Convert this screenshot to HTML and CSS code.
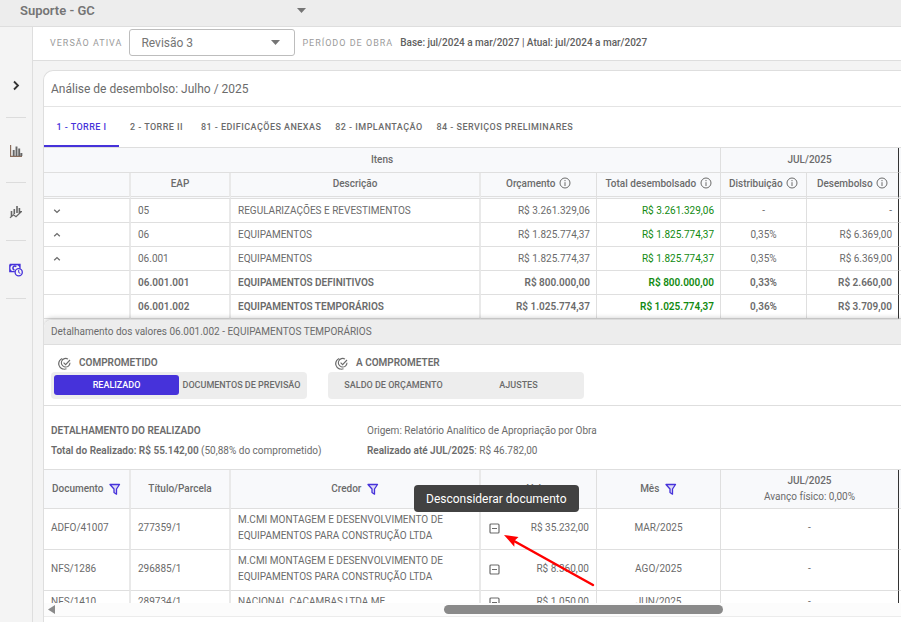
FILE: index.html
```html
<!DOCTYPE html>
<html lang="pt-BR">
<head>
<meta charset="utf-8">
<title>Análise de desembolso</title>
<link rel="stylesheet" href="styles.css">
</head>
<body>
<svg class="defs" aria-hidden="true">
  <symbol id="info" viewBox="0 0 12 12"><circle cx="6" cy="6" r="5" fill="none" stroke="currentColor"/><path d="M6 5.2V9M6 3v1.2" stroke="currentColor"/></symbol>
  <symbol id="filter" viewBox="0 0 12 12"><path d="M1 1.500h9.500L7.500 6v5.200L5 9.500V6z" fill="#4632da" fill-opacity=".15" stroke="currentColor" stroke-width="1.300" stroke-linejoin="round"/></symbol>
  <symbol id="check" viewBox="0 0 13 13"><path d="M12 5.800A4.300 4.300 0 1 1 10 2.100M8.500 11.800A5.400 5.400 0 0 1 4.200 1.600M1.800 3.200A5.800 5.800 0 0 0 4.300 12M5.600 5.600l2 2L12 3" fill="none" stroke="currentColor" stroke-width="1.100"/></symbol>
  <symbol id="minus" viewBox="0 0 11 11"><rect x="1" y="1" width="9" height="9" rx="1" fill="none" stroke="currentColor" stroke-width="1.200"/><path d="M3 5.500h5" stroke="currentColor"/></symbol>
  <symbol id="down" viewBox="0 0 8 8"><path d="M1.200 2.800L4 5.400l2.800-2.600" fill="none" stroke="currentColor" stroke-width="1.300"/></symbol>
  <symbol id="up" viewBox="0 0 8 8"><path d="M1.200 5.200L4 2.600l2.800 2.600" fill="none" stroke="currentColor" stroke-width="1.300"/></symbol>
</svg>

<header class="topbar">
  <select class="company" aria-label="Empresa"><option>Suporte - GC</option></select>
</header>

<div class="shell">
  <nav class="sidebar" aria-label="Menu">
    <button class="side-item side-toggle" aria-label="Expandir menu"><svg viewBox="0 0 14 14"><path d="M5 3.500l4 4-4 4" fill="none" stroke="#333" stroke-width="1.800"/></svg></button>
    <button class="side-item side-tall" aria-label="Indicadores"><svg viewBox="0 0 14 14"><path d="M1.600 2v11.400H13" fill="none" stroke="#8a6d5c" stroke-width="1.200"/><path d="M4.700 7v6M7.500 3.500V13M10.200 5.500V13M12.400 10v3" stroke="#666" stroke-width="1.900"/></svg></button>
    <button class="side-item" aria-label="Análises"><svg viewBox="0 0 14 14"><path d="M2.500 6v5M5.300 4v5M8 1v7M10.400 3v5" stroke="#666" stroke-width="1.600"/><path d="M1 12.700l3.500-3 2.500 2 5.500-5.200M10 6.500h3" fill="none" stroke="#666" stroke-width="1.200"/></svg></button>
    <button class="side-item side-current" aria-label="Desembolso"><svg viewBox="0 0 14 14"><path d="M.8 1.500h10.200v4M.8 1.500v7.200h5" fill="none" stroke="currentColor" stroke-width="1.300"/><path d="M1 1.500h2.500L1 4zM11 1.500v3L8 1.500zM1 9V6l3 3z" fill="currentColor"/><path d="M7.300 3.600A2 2 0 1 0 5.500 7" fill="none" stroke="currentColor" stroke-width="1.500"/><circle cx="9.700" cy="9.300" r="3.600" fill="#f4f4f4" stroke="currentColor" stroke-width="1.300"/><path d="M9.700 7v2.500l1.600.9" fill="none" stroke="currentColor"/></svg></button>
  </nav>

  <main class="content">
    <div class="toolbar">
      <label class="caption" for="versao">VERSÃO ATIVA</label>
      <select class="version" id="versao"><option>Revisão 3</option></select>
      <span class="caption">PERÍODO DE OBRA</span>
      <span class="period">Base: jul/2024 a mar/2027 | Atual: jul/2024 a mar/2027</span>
    </div>

    <section class="card">
      <h1 class="card-title">Análise de desembolso: Julho / 2025</h1>
      <div class="tabs" role="tablist">
        <button class="tab tab-active" role="tab" aria-selected="true">1 - TORRE I</button>
        <button class="tab" role="tab">2 - TORRE II</button>
        <button class="tab" role="tab">81 - EDIFICAÇÕES ANEXAS</button>
        <button class="tab" role="tab">82 - IMPLANTAÇÃO</button>
        <button class="tab" role="tab">84 - SERVIÇOS PRELIMINARES</button>
      </div>

      <table class="grid">
        <colgroup><col class="c-a"><col class="c-b"><col class="c-c"><col class="c-d"><col class="c-e"><col class="c-f"><col class="c-g"><col></colgroup>
        <thead>
          <tr><th colspan="5">Itens</th><th class="month-end" colspan="2">JUL/2025</th><th></th></tr>
          <tr class="head-last"><th class="wide"></th><th class="wide">EAP</th><th class="wide">Descrição</th><th>Orçamento <svg class="info"><use href="#info"/></svg></th><th>Total desembolsado <svg class="info"><use href="#info"/></svg></th><th>Distribuição <svg class="info"><use href="#info"/></svg></th><th class="month-end">Desembolso <svg class="info"><use href="#info"/></svg></th><th></th></tr>
        </thead>
        <tbody>
          <tr><td class="wide"><button class="expand" aria-label="Expandir"><svg><use href="#down"/></svg></button></td><td class="wide">05</td><td class="wide">REGULARIZAÇÕES E REVESTIMENTOS</td><td class="num">R$ 3.261.329,06</td><td class="num paid">R$ 3.261.329,06</td><td class="mid">-</td><td class="num month-end">-</td><td></td></tr>
          <tr><td class="wide"><button class="expand" aria-label="Recolher"><svg><use href="#up"/></svg></button></td><td class="wide">06</td><td class="wide">EQUIPAMENTOS</td><td class="num">R$ 1.825.774,37</td><td class="num paid">R$ 1.825.774,37</td><td class="mid">0,35%</td><td class="num month-end">R$ 6.369,00</td><td></td></tr>
          <tr><td class="wide"><button class="expand" aria-label="Recolher"><svg><use href="#up"/></svg></button></td><td class="wide">06.001</td><td class="wide">EQUIPAMENTOS</td><td class="num">R$ 1.825.774,37</td><td class="num paid">R$ 1.825.774,37</td><td class="mid">0,35%</td><td class="num month-end">R$ 6.369,00</td><td></td></tr>
          <tr class="leaf"><td class="wide"></td><td class="wide">06.001.001</td><td class="wide">EQUIPAMENTOS DEFINITIVOS</td><td class="num">R$ 800.000,00</td><td class="num paid">R$ 800.000,00</td><td class="mid">0,33%</td><td class="num month-end">R$ 2.660,00</td><td></td></tr>
          <tr class="leaf"><td class="wide"></td><td class="wide">06.001.002</td><td class="wide">EQUIPAMENTOS TEMPORÁRIOS</td><td class="num">R$ 1.025.774,37</td><td class="num paid">R$ 1.025.774,37</td><td class="mid">0,36%</td><td class="num month-end">R$ 3.709,00</td><td></td></tr>
        </tbody>
      </table>

      <section class="detail">
        <h2 class="detail-title">Detalhamento dos valores 06.001.002 - EQUIPAMENTOS TEMPORÁRIOS</h2>
        <div class="groups">
          <div class="group">
            <h3 class="group-name"><svg><use href="#check"/></svg>COMPROMETIDO</h3>
            <div class="segments"><button class="segment segment-on">REALIZADO</button><button class="segment">DOCUMENTOS DE PREVISÃO</button></div>
          </div>
          <div class="group">
            <h3 class="group-name"><svg><use href="#check"/></svg>A COMPROMETER</h3>
            <div class="segments"><button class="segment">SALDO DE ORÇAMENTO</button><button class="segment">AJUSTES</button></div>
          </div>
        </div>
        <div class="summary">
          <div class="summary-col"><p><b>DETALHAMENTO DO REALIZADO</b></p><p><b>Total do Realizado: R$ 55.142,00</b> (50,88% do comprometido)</p></div>
          <div class="summary-col"><p>Origem: Relatório Analítico de Apropriação por Obra</p><p><b>Realizado até JUL/2025</b>: R$ 46.782,00</p></div>
        </div>
        <div class="documents">
          <table class="grid grid-docs">
            <colgroup><col class="c-a"><col class="c-b"><col class="c-c"><col class="c-d"><col class="c-e"><col class="c-h"><col></colgroup>
            <thead>
              <tr><th class="wide">Documento <svg class="filter"><use href="#filter"/></svg></th><th class="wide">Título/Parcela</th><th class="wide">Credor <svg class="filter"><use href="#filter"/></svg></th><th>Valor</th><th>Mês <svg class="filter"><use href="#filter"/></svg></th><th class="month-end">JUL/2025<small class="progress">Avanço físico: 0,00%</small></th><th></th></tr>
            </thead>
            <tbody>
              <tr><td class="wide">ADFO/41007</td><td class="wide">277359/1</td><td class="wide">M.CMI MONTAGEM E DESENVOLVIMENTO DE EQUIPAMENTOS PARA CONSTRUÇÃO LTDA</td>
                <td><div class="value"><span class="discard-wrap"><button class="discard" aria-label="Desconsiderar documento" aria-describedby="tip"><svg><use href="#minus"/></svg></button><span class="tooltip" id="tip" role="tooltip">Desconsiderar documento</span><svg class="pointer" viewBox="0 0 92 54" aria-hidden="true"><path d="M10 7L89 51" stroke="#f00" stroke-width="2.500" stroke-linecap="round"/><path d="M0 1l14.500 2-4 3.800-.2 6z" fill="#f00"/></svg></span>R$ 35.232,00</div></td><td class="mid">MAR/2025</td><td class="mid month-end">-</td><td></td></tr>
              <tr><td class="wide">NFS/1286</td><td class="wide">296885/1</td><td class="wide">M.CMI MONTAGEM E DESENVOLVIMENTO DE EQUIPAMENTOS PARA CONSTRUÇÃO LTDA</td>
                <td><div class="value"><button class="discard" aria-label="Desconsiderar documento"><svg><use href="#minus"/></svg></button>R$ 8.360,00</div></td><td class="mid">AGO/2025</td><td class="mid month-end">-</td><td></td></tr>
              <tr><td class="wide">NFS/1410</td><td class="wide">289734/1</td><td class="wide">NACIONAL CAÇAMBAS LTDA ME</td>
                <td><div class="value"><button class="discard" aria-label="Desconsiderar documento"><svg><use href="#minus"/></svg></button>R$ 1.050,00</div></td><td class="mid">JUN/2025</td><td class="mid month-end">-</td><td></td></tr>
            </tbody>
          </table>
        </div>
        <div class="scrollbar"><svg class="scroll-arrow" viewBox="0 0 8 10"><path d="M7 0v9L0 4.500z" fill="#8a8a8a"/></svg><div class="scroll-track"><div class="scroll-thumb"></div></div></div>
      </section>
    </section>
  </main>
</div>
</body>
</html>
```
FILE: styles.css
```css
* { box-sizing: border-box; }

body {
  margin: 0;
  height: 100vh;
  display: flex;
  flex-direction: column;
  overflow: hidden;
  background: #f4f4f4;
  color: #6b6b6b;
  font: 10px/16px Roboto, sans-serif;
}

h1, h2, h3, p { margin: 0; font-weight: 400; }
b { font-weight: 600; }
button { padding: 0; border: 0; background: none; color: inherit; font: inherit; }
.defs { display: none; }

select {
  appearance: none;
  border: 0;
  background: no-repeat right 14px center / 9px 5px url("data:image/svg+xml,%3Csvg xmlns='http://www.w3.org/2000/svg' viewBox='0 0 9 5'%3E%3Cpath d='M0 0h9L4.500 5z' fill='%23757575'/%3E%3C/svg%3E");
  color: #757575;
  font: inherit;
}

.topbar {
  flex: none;
  display: flex;
  padding: 0 16px 5px;
  background-color: #ededed;
  border-bottom: 1px solid #dedede;
}
.company {
  width: 304px;
  height: 21px;
  padding: 0 4px;
  font-size: 13px;
  font-weight: 600;
}

.shell { flex: 1; min-height: 0; display: flex; }

.sidebar {
  flex: none;
  width: 33px;
  display: flex;
  flex-direction: column;
  align-items: center;
  padding-top: 26px;
  border-right: 1px solid #dedede;
}
.side-item {
  width: 20px;
  height: 58px;
  display: grid;
  place-items: center;
  border-bottom: 1px solid #dcdcdc;
}
.side-toggle, .side-tall { height: 65px; }
.side-item svg { width: 14px; height: 14px; }
.side-current { color: #4632da; }

.content { flex: 1; min-width: 0; display: flex; flex-direction: column; }

.toolbar {
  display: flex;
  align-items: center;
  gap: 7px;
  padding: 2px 17px 4px;
  height: 34px;
  background: #fff;
  border-bottom: 1px solid #dedede;
}
.caption { color: #9b9b9b; font-size: 9px; letter-spacing: 1px; white-space: nowrap; }
.version {
  width: 166px;
  height: 27px;
  padding: 0 11px;
  border: 1px solid #bdbdbd;
  border-radius: 3px;
  background-color: #fff;
  font-size: 12px;
}
.period { font-weight: 500; color: #606060; white-space: nowrap; }

.card {
  flex: 1;
  min-height: 0;
  display: flex;
  flex-direction: column;
  margin: 9px 0 0 10px;
  overflow: hidden;
  background: #fff;
  border: solid #dedede;
  border-width: 1px 0 0 1px;
  border-radius: 10px 0 0 0;
}
.card-title {
  padding: 1px 7px 0;
  font-size: 12px;
  line-height: 34px;
  border-bottom: 1px solid #e4e4e4;
}

.tabs { display: flex; border-bottom: 1px solid #dedede; }
.tab {
  min-width: 75px;
  height: 40px;
  padding: 2px 7px 0;
  border-bottom: 2px solid transparent;
  font-size: 9px;
  font-weight: 500;
  letter-spacing: 0.05em;
  white-space: nowrap;
}
.tab-active { color: #4632da; border-color: #4632da; }

.grid {
  flex: none;
  width: 100%;
  table-layout: fixed;
  border-collapse: separate;
  border-spacing: 0;
}
.c-a { width: 87px; }
.c-b { width: 100px; }
.c-c { width: 250px; }
.c-d { width: 116px; }
.c-e { width: 124px; }
.c-f { width: 86px; }
.c-g { width: 92px; }
.c-h { width: 178px; }

.grid th, .grid td {
  padding: 0 7px;
  border: solid #dfdfdf;
  border-width: 0 1px 1px 0;
  white-space: nowrap;
}
.grid th {
  height: 25px;
  padding: 0 2px;
  background: #f8f9fb;
  font-weight: 500;
  text-align: center;
}
.grid td { height: 24px; text-align: left; }
.grid .wide { border-right: 2px solid #e9e9e9; }
.grid .month-end { border-right: 1px solid #333; }
.grid th:last-child, .grid td:last-child { padding: 0; border-right: 0; }
.grid .head-last th { height: 26px; padding-bottom: 2px; border-bottom: 3px double #dfdfdf; }
.grid .num { text-align: right; padding: 0 6px; }
.grid .mid { text-align: center; }
.grid .paid { color: #118a11; }
.grid .leaf { font-weight: 600; }

.info { width: 12px; height: 12px; margin-left: 1px; vertical-align: -2px; }
.filter { width: 12px; height: 12px; margin-left: 3px; color: #4632da; vertical-align: -3px; }
.expand { width: 12px; height: 12px; display: grid; place-items: center; }
.expand svg { width: 8px; height: 8px; }

.detail {
  flex: 1;
  min-height: 0;
  display: flex;
  flex-direction: column;
  margin-top: 1px;
  border-radius: 8px 0 0 0;
  background: #fff;
  box-shadow: 0 -2px 5px rgba(0, 0, 0, 0.2);
}
.detail-title {
  padding: 0 7px;
  font-size: 10px;
  line-height: 24px;
  background: #ededed;
  border-bottom: 1px solid #dedede;
  border-radius: 8px 0 0 0;
}

.groups { display: flex; gap: 21px; padding: 10px 7px 6px; border-bottom: 1px solid #dedede; }
.group-name {
  display: flex;
  align-items: center;
  gap: 8px;
  padding-left: 7px;
  font-size: 10px;
  font-weight: 600;
}
.group-name svg { width: 13px; height: 13px; }
.segments { display: flex; margin-top: 1px; padding: 3px 3px 4px; background: #ededed; border-radius: 4px; }
.segment {
  width: 125px;
  height: 20px;
  border-radius: 3px;
  font-size: 9px;
  font-weight: 500;
  white-space: nowrap;
}
.segment-on { background: #4632da; color: #fff; }

.summary { display: flex; padding: 15px 7px 8px; line-height: 20px; border-bottom: 1px solid #dedede; }
.summary-col { flex: none; width: 316px; white-space: nowrap; }

.documents { flex: 1; min-height: 0; overflow: hidden; }
.grid-docs th { height: 39px; }
.grid-docs td { height: 41px; }
.grid-docs td:nth-child(3) { white-space: normal; }
.grid-docs td { padding-bottom: 2px; }
.grid-docs tbody tr:last-child td { height: 25px; }
.progress { display: block; font-size: 10px; font-weight: 400; }

.value { display: flex; align-items: center; justify-content: space-between; }
.discard-wrap { position: relative; display: flex; }
.discard { width: 13px; height: 13px; display: grid; place-items: center; }
.discard svg { width: 11px; height: 11px; }
.tooltip {
  position: absolute;
  bottom: 23px;
  left: -74px;
  padding: 6px 12px 5px;
  border-radius: 4px;
  background: #424242;
  color: #fff;
  font-size: 12px;
  line-height: 16px;
}
.pointer { position: absolute; left: 16px; top: 12px; width: 92px; height: 54px; }

.scrollbar { flex: none; display: flex; align-items: center; height: 14px; padding: 0 4px; margin-bottom: 5px; background: #fcfcfc; border-bottom: 1px solid #ececec; }
.scroll-arrow { width: 8px; height: 10px; }
.scroll-track { flex: 1; padding-left: 388px; padding-right: 174px; }
.scroll-thumb { height: 9px; border-radius: 5px; background: #8a8a8a; }
```
